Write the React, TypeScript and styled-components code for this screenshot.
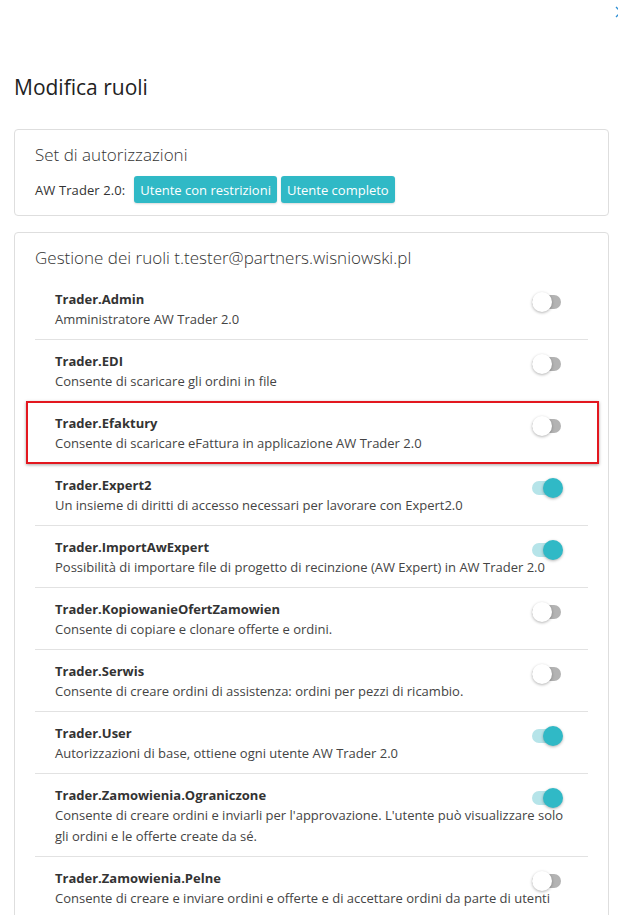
import styled, { createGlobalStyle } from 'styled-components'

const GlobalStyle = createGlobalStyle`
    html, body {
        margin: 0;
        padding: 0;
        background: #fff;
        overflow-x: hidden;
    }
    body {
        font-family: 'Open Sans', 'Noto Sans', sans-serif;
        color: #333;
    }
`

const Page = styled.div`
    display: flex;
    flex-direction: column;
    padding: 0 9px 0 14px;
`

const TopBar = styled.div`
    display: flex;
    justify-content: flex-end;
    height: 24px;
    margin-right: -15px;
    padding-top: 6px;
    box-sizing: border-box;
    color: #2d8fd5;
`

const PageTitle = styled.h1`
    margin: 49px 0 28px;
    font-size: 21px;
    line-height: 28px;
    font-weight: 400;
    color: #222;
`

const Card = styled.div`
    border: 1px solid #dedede;
    border-radius: 4px;
    padding: 13px 20px 12px;
    margin-bottom: 16px;
    background: #fff;
`

const CardTitle = styled.h2`
    margin: 0;
    font-size: 17px;
    line-height: 24px;
    font-weight: 300;
    color: #333;
`

const PresetRow = styled.div`
    display: flex;
    align-items: center;
    gap: 4px;
    margin-top: 9px;
    font-size: 13px;
`

const PresetLabel = styled.span`
    margin-right: 5px;
    color: #333;
    letter-spacing: 0.1px;
`

const PresetButton = styled.button`
    height: 27px;
    padding: 0 6px;
    border: none;
    border-radius: 3px;
    background: #30b9c6;
    color: #fff;
    font-family: inherit;
    font-size: 13px;
    box-shadow: 0 1px 2px rgba(0, 0, 0, 0.15);
    cursor: pointer;
`

const RoleList = styled.div`
    display: flex;
    flex-direction: column;
    margin-top: 8px;
`

const RoleRow = styled.div<{ highlighted?: boolean }>`
    position: relative;
    display: flex;
    flex-direction: column;
    padding: 11px 20px 9px 20px;
    border-bottom: 1px solid #e2e2e2;

    &:last-child {
        border-bottom: none;
    }

    ${(props) =>
        props.highlighted &&
        `
        &::after {
            content: '';
            position: absolute;
            top: -1px;
            bottom: -1px;
            left: -9px;
            right: -11px;
            border: 2px solid #e3171f;
            box-shadow: 0 1px 3px rgba(0, 0, 0, 0.35);
            pointer-events: none;
        }
    `}
`

const RoleHead = styled.div`
    display: flex;
    align-items: flex-start;
    justify-content: space-between;
`

const RoleName = styled.div`
    font-size: 13px;
    line-height: 20px;
    font-weight: 700;
    color: #333;
`

const RoleDescription = styled.div`
    font-size: 13px;
    line-height: 21px;
    color: #444;
`

const SwitchTrack = styled.div<{ on: boolean }>`
    position: relative;
    flex: none;
    width: 29px;
    height: 14px;
    margin: 6px 7px 0 0;
    border-radius: 7px;
    background: ${(props) => (props.on ? '#b6e4e9' : '#b3b3b3')};
`

const SwitchKnob = styled.div<{ on: boolean }>`
    position: absolute;
    top: -3px;
    left: ${(props) => (props.on ? '11px' : '0')};
    width: 20px;
    height: 20px;
    border-radius: 50%;
    background: ${(props) => (props.on ? '#30b9c6' : '#fff')};
    box-shadow: 0 1px 3px rgba(0, 0, 0, 0.3);
`

interface Role {
    name: string
    description: string
    on: boolean
    highlighted?: boolean
}

const roles: Role[] = [
    { name: 'Trader.Admin', description: 'Amministratore AW Trader 2.0', on: false },
    { name: 'Trader.EDI', description: 'Consente di scaricare gli ordini in file', on: false },
    {
        name: 'Trader.Efaktury',
        description: 'Consente di scaricare eFattura in applicazione AW Trader 2.0',
        on: false,
        highlighted: true,
    },
    {
        name: 'Trader.Expert2',
        description: 'Un insieme di diritti di accesso necessari per lavorare con Expert2.0',
        on: true,
    },
    {
        name: 'Trader.ImportAwExpert',
        description:
            'Possibilità di importare file di progetto di recinzione (AW Expert) in AW Trader 2.0',
        on: true,
    },
    {
        name: 'Trader.KopiowanieOfertZamowien',
        description: 'Consente di copiare e clonare offerte e ordini.',
        on: false,
    },
    {
        name: 'Trader.Serwis',
        description: 'Consente di creare ordini di assistenza: ordini per pezzi di ricambio.',
        on: false,
    },
    {
        name: 'Trader.User',
        description: 'Autorizzazioni di base, ottiene ogni utente AW Trader 2.0',
        on: true,
    },
    {
        name: 'Trader.Zamowienia.Ograniczone',
        description:
            "Consente di creare ordini e inviarli per l'approvazione. L'utente può visualizzare solo gli ordini e le offerte create da sé.",
        on: true,
    },
    {
        name: 'Trader.Zamowienia.Pelne',
        description:
            'Consente di creare e inviare ordini e offerte e di accettare ordini da parte di utenti',
        on: false,
    },
]

const Switch = ({ on }: { on: boolean }) => (
    <SwitchTrack on={on}>
        <SwitchKnob on={on} />
    </SwitchTrack>
)

const App = () => {
    return (
        <>
            <GlobalStyle />
            <Page>
                <TopBar>
                    <svg width="10" height="12" viewBox="0 0 10 12">
                        <path d="M2 1l5 5-5 5" fill="none" stroke="currentColor" strokeWidth="1.3" />
                    </svg>
                </TopBar>
                <PageTitle>Modifica ruoli</PageTitle>
                <Card>
                    <CardTitle>Set di autorizzazioni</CardTitle>
                    <PresetRow>
                        <PresetLabel>AW Trader 2.0:</PresetLabel>
                        <PresetButton>Utente con restrizioni</PresetButton>
                        <PresetButton>Utente completo</PresetButton>
                    </PresetRow>
                </Card>
                <Card>
                    <CardTitle>Gestione dei ruoli t.tester@partners.wisniowski.pl</CardTitle>
                    <RoleList>
                        {roles.map((role) => (
                            <RoleRow key={role.name} highlighted={role.highlighted}>
                                <RoleHead>
                                    <RoleName>{role.name}</RoleName>
                                    <Switch on={role.on} />
                                </RoleHead>
                                <RoleDescription>{role.description}</RoleDescription>
                            </RoleRow>
                        ))}
                    </RoleList>
                </Card>
            </Page>
        </>
    )
}

export default App
